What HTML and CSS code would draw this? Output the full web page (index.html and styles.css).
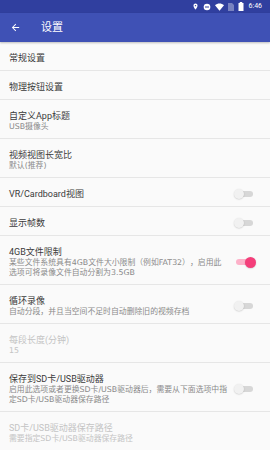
FILE: index.html
```html
<!DOCTYPE html>
<html lang="zh">
<head>
<meta charset="utf-8">
<link rel="stylesheet" href="styles.css">
</head>
<body>
<div class="status">
  <svg class="si" width="7" height="9" viewBox="0 0 24 24"><path fill="#fff" d="M12 2C8.1 2 5 5.1 5 9c0 5.2 7 13 7 13s7-7.8 7-13c0-3.9-3.1-7-7-7zm0 9.5a2.5 2.5 0 1 1 0-5 2.5 2.5 0 0 1 0 5z"/></svg>
  <svg class="si" width="8" height="8" viewBox="0 0 24 24"><circle cx="12" cy="12" r="10" fill="#fff"/><rect x="6" y="10.5" width="12" height="3" fill="#303f9f"/></svg>
  <svg class="si" width="9" height="8" viewBox="0 0 24 20"><path fill="#fff" d="M12 20L0 5C3.5 2 7.5 0.5 12 0.5S20.5 2 24 5z"/></svg>
  <svg class="si dim" width="6" height="8" viewBox="0 0 12 16"><path fill="#fff" d="M2 0h6l4 4v12H0V0z"/></svg>
  <svg class="si" width="6" height="9" viewBox="0 0 12 18"><rect x="3.5" y="0" width="5" height="2" fill="#fff"/><rect x="1" y="2" width="10" height="16" fill="#fff"/></svg>
  <span class="time">6:46</span>
</div>
<div class="appbar">
  <svg class="back" width="11" height="11" viewBox="0 0 24 24"><path fill="#fff" d="M20 11H7.8l5.6-5.6L12 4l-8 8 8 8 1.4-1.4L7.8 13H20z"/></svg>
  <span class="apptitle">设置</span>
</div>
<div class="list">
  <div class="row"><div class="text"><div class="title">常规设置</div></div></div>
  <div class="row"><div class="text"><div class="title">物理按钮设置</div></div></div>
  <div class="row"><div class="text"><div class="title">自定义App标题</div><div class="sub">USB摄像头</div></div></div>
  <div class="row"><div class="text"><div class="title">视频视图长宽比</div><div class="sub">默认(推荐)</div></div></div>
  <div class="row"><div class="text"><div class="title">VR/Cardboard视图</div></div><div class="sw"><span class="track"></span><span class="thumb"></span></div></div>
  <div class="row"><div class="text"><div class="title">显示帧数</div></div><div class="sw"><span class="track"></span><span class="thumb"></span></div></div>
  <div class="row"><div class="text"><div class="title">4GB文件限制</div><div class="sub">某些文件系统具有4GB文件大小限制（例如FAT32），启用此选项可将录像文件自动分割为3.5GB</div></div><div class="sw on"><span class="track"></span><span class="thumb"></span></div></div>
  <div class="row"><div class="text"><div class="title">循环录像</div><div class="sub">自动分段，并且当空间不足时自动删除旧的视频存档</div></div><div class="sw"><span class="track"></span><span class="thumb"></span></div></div>
  <div class="row disabled"><div class="text"><div class="title">每段长度(分钟)</div><div class="sub">15</div></div></div>
  <div class="row"><div class="text"><div class="title">保存到SD卡/USB驱动器</div><div class="sub">启用此选项或者更换SD卡/USB驱动器后，需要从下面选项中指定SD卡/USB驱动器保存路径</div></div><div class="sw"><span class="track"></span><span class="thumb"></span></div></div>
  <div class="row disabled"><div class="text"><div class="title">SD卡/USB驱动器保存路径</div><div class="sub">需要指定SD卡/USB驱动器保存路径</div></div></div>
</div>
</body>
</html>
```
FILE: styles.css
```css
* { box-sizing: border-box; }
html, body { margin: 0; padding: 0; }
body {
  width: 270px;
  height: 450px;
  overflow: hidden;
  background: #fafafa;
  font-family: Roboto, "Noto Sans CJK SC", sans-serif;
}
.status {
  height: 13px;
  background: #303f9f;
  display: flex;
  align-items: center;
  justify-content: flex-end;
  padding-right: 8px;
  gap: 4px;
}
.si { display: block; }
.si.dim { opacity: 0.35; }
.time {
  color: #fff;
  font-size: 7px;
  line-height: 13px;
  margin-left: 1px;
}
.appbar {
  height: 29px;
  background: #3f51b5;
  display: flex;
  align-items: center;
  padding-left: 10px;
  box-shadow: 0 1px 2px rgba(0,0,0,0.25);
  position: relative;
  z-index: 1;
}
.back { display: block; }
.apptitle {
  color: #fff;
  font-size: 11px;
  margin-left: 20px;
  line-height: 14px;
}
.list { display: flex; flex-direction: column; }
.row {
  display: flex;
  align-items: center;
  padding: 10px 0 6px 9px;
  border-bottom: 1px solid #e6e6e6;
  min-height: 29px;
}
.text { flex: 1; min-width: 0; }
.title {
  font-size: 9px;
  line-height: 12px;
  color: #3a3a3a;
}
.sub {
  font-family: "DejaVu Sans", "Noto Sans CJK SC", sans-serif;
  font-size: 7.85px;
  line-height: 10px;
  color: #8a8a8a;
  text-spacing-trim: space-all;
}
.disabled .title, .disabled .sub { color: #c4c4c4; }
.sw {
  width: 41px;
  flex: none;
  position: relative;
  height: 12px;
}
.track {
  position: absolute;
  left: 7px;
  top: 3px;
  width: 17px;
  height: 6px;
  border-radius: 3px;
  background: #c8c8c8;
  opacity: 0.7;
}
.thumb {
  position: absolute;
  left: 5px;
  top: 1px;
  width: 10px;
  height: 10px;
  border-radius: 50%;
  background: #f1f1f1;
  box-shadow: 0 0.5px 1.5px rgba(0,0,0,0.2);
}
.sw.on .track { background: #ff80a8; opacity: 0.6; }
.sw.on .thumb {
  left: 16px;
  background: #f43e7a;
  width: 11px;
  height: 11px;
  top: 0.5px;
}
```
